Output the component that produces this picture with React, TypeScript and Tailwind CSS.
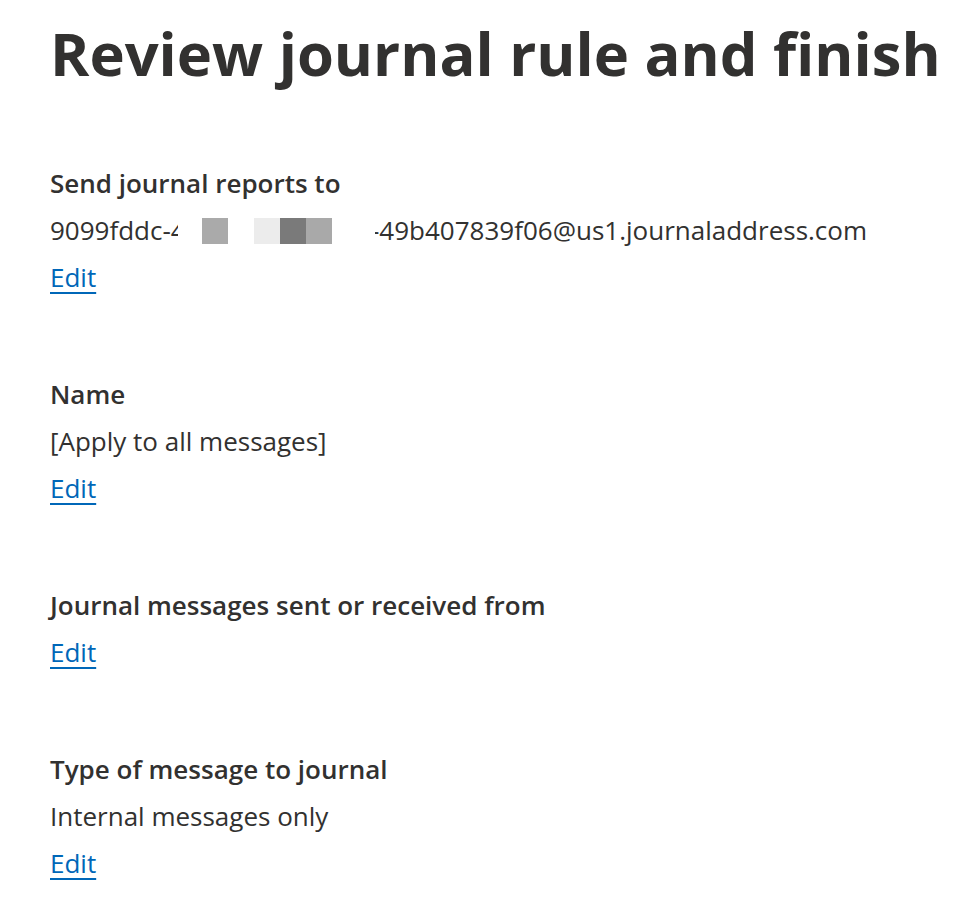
import React from 'react';

const textFont = { fontFamily: '"Open Sans", "Noto Sans", Arial, sans-serif' };

const EditLink: React.FC = () => (
    <div className="h-[47px] leading-[47px]">
        <a href="#" className="text-[#0067b8] underline underline-offset-[5px] decoration-[1.5px]">Edit</a>
    </div>
);

interface SectionProps {
    label: string;
    value?: React.ReactNode;
}

const Section: React.FC<SectionProps> = ({ label, value }) => (
    <section className="mb-[70px]">
        <div className="h-[47px] leading-[47px] font-semibold text-[#323130]">{label}</div>
        {value && <div className="h-[47px] leading-[47px] text-[#323130]">{value}</div>}
        <EditLink />
    </section>
);

// address is partly blurred out in the original, blocks stand in for the hidden part
const RedactedAddress: React.FC = () => (
    <span className="flex items-center">
        <span className="inline-block w-[128px] overflow-hidden whitespace-nowrap">9099fddc-4</span>
        <span className="ml-[24px] inline-block w-[26px] h-[26px] bg-[#aaaaaa]" />
        <span className="ml-[26px] inline-block w-[26px] h-[26px] bg-[#ececec]" />
        <span className="inline-block w-[26px] h-[26px] bg-[#7a7a7a]" />
        <span className="inline-block w-[26px] h-[26px] bg-[#a9a9a9]" />
        <span className="ml-[43px] inline-block overflow-hidden whitespace-nowrap">
            <span className="inline-block -ml-[4px]">-49b407839f06@us1.journaladdress.com</span>
        </span>
    </span>
);

const App: React.FC = () => {
    return (
        <div className="min-h-screen bg-white px-[50px] text-[26px]" style={textFont}>
            <h1 className="pt-[13px] h-[160px] text-[59.7px] leading-[80px] font-bold text-[#323130] whitespace-nowrap">
                Review journal rule and finish
            </h1>
            <Section label="Send journal reports to" value={<RedactedAddress />} />
            <Section label="Name" value="[Apply to all messages]" />
            <Section label="Journal messages sent or received from" />
            <Section label="Type of message to journal" value="Internal messages only" />
        </div>
    );
};

export default App;
